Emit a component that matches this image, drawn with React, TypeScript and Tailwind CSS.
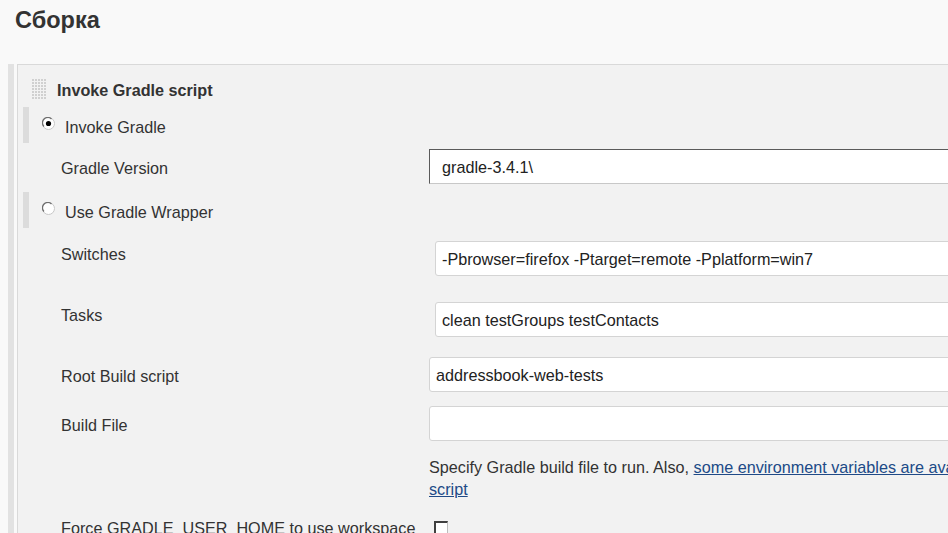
import React from "react";

function Handle() {
  const dots = [];
  for (let r = 0; r < 7; r++) {
    for (let c = 0; c < 5; c++) {
      dots.push(<rect key={r + "-" + c} x={c * 3} y={r * 3} width="2" height="2" fill="#d0d0d0" />);
    }
  }
  return (
    <svg width="15" height="21" viewBox="0 0 15 21">
      {dots}
    </svg>
  );
}

function Radio({ checked }: { checked?: boolean }) {
  return (
    <svg width="13" height="13" viewBox="0 0 13 13">
      <circle cx="6.5" cy="6.5" r="6" fill="#fff" stroke="#c8c8c8" />
      <path d="M2 9.5 A5 5 0 0 1 9.5 2" fill="none" stroke="#6e6e6e" strokeWidth="1.2" />
      {checked && <circle cx="6.5" cy="6.5" r="2.6" fill="#000" />}
    </svg>
  );
}

function RadioRow({ label, checked }: { label: string; checked?: boolean }) {
  return (
    <div className="flex ml-[5px] h-[36px]">
      <div className="w-[6px] bg-[#dcdcdc]" />
      <div className="flex items-center pl-[13px] gap-[10px] pt-[2px]">
        <div className="-mt-[6px]">
          <Radio checked={checked} />
        </div>
        <span className="text-[16.2px] pt-[2px]">{label}</span>
      </div>
    </div>
  );
}

const inputCls =
  "shrink-0 w-[560px] h-[35px] bg-white border border-[#d4d4d4] rounded-[3px] pl-[6px] text-[16.2px] text-[#222] outline-none";

export default function App() {
  return (
    <div className="w-[948px] h-[533px] overflow-hidden bg-[#f9f9f9] text-[#333] font-['Liberation_Sans',Arial,sans-serif]">
      <h1 className="pl-[15px] pt-[5px] text-[23.5px] font-bold leading-[30px] text-[#333]">Сборка</h1>

      <div className="mt-[29px] ml-[8px] flex h-[500px]">
        {/* outer bar */}
        <div className="w-[6px] bg-[#e2e2e2]" />

        {/* panel */}
        <div className="ml-[3px] flex-1 border-t border-l border-[#d9d9d9] bg-[#f2f2f2] overflow-hidden">
          {/* title */}
          <div className="flex items-center h-[21px] mt-[14px] pl-[14px]">
            <Handle />
            <span className="ml-[10px] pt-[2px] text-[16.2px] font-bold text-[#333]">Invoke Gradle script</span>
          </div>

          <div className="mt-[7px]">
            <RadioRow label="Invoke Gradle" checked />
          </div>

          {/* gradle version */}
          <div className="flex items-center h-[35px] mt-[6px]">
            <div className="shrink-0 w-[411px] pl-[43px] pt-[3px] text-[16.2px]">Gradle Version</div>
            <input
              readOnly
              defaultValue="gradle-3.4.1\"
              className="shrink-0 w-[560px] h-[35px] bg-white border border-[#c8c8c8] border-t-[#5a5a5a] border-l-[#5a5a5a] pl-[12px] pt-[2px] text-[16.2px] text-[#222] outline-none"
            />
          </div>

          <div className="mt-[8px]">
            <RadioRow label="Use Gradle Wrapper" />
          </div>

          {/* switches */}
          <div className="flex h-[35px] mt-[13px]">
            <div className="shrink-0 w-[411px] pl-[43px] pt-[1px] text-[16.2px]">Switches</div>
            <input
              readOnly
              defaultValue="-Pbrowser=firefox -Ptarget=remote -Pplatform=win7"
              className={"ml-[6px] pt-[1px] " + inputCls}
            />
          </div>

          {/* tasks */}
          <div className="flex h-[35px] mt-[26px]">
            <div className="shrink-0 w-[411px] pl-[43px] pt-[1px] text-[16.2px]">Tasks</div>
            <input
              readOnly
              defaultValue="clean testGroups testContacts"
              className={"ml-[6px] pt-[1px] " + inputCls}
            />
          </div>

          {/* root build script */}
          <div className="flex items-center h-[35px] mt-[20px]">
            <div className="shrink-0 w-[411px] pl-[43px] pt-[3px] text-[16.2px]">Root Build script</div>
            <input readOnly defaultValue="addressbook-web-tests" className={"pt-[1px] " + inputCls} />
          </div>

          {/* build file */}
          <div className="flex items-center h-[35px] mt-[14px]">
            <div className="shrink-0 w-[411px] pl-[43px] pt-[3px] text-[16.2px]">Build File</div>
            <input readOnly defaultValue="" className={inputCls} />
          </div>

          {/* help */}
          <div className="flex mt-[15px]">
            <div className="w-[411px] shrink-0" />
            <div className="text-[16.2px] leading-[22px] whitespace-nowrap text-[#333]">
              Specify Gradle build file to run. Also,{" "}
              <a className="underline text-[#204a87]">some environment variables are available to the build</a>
              <br />
              <a className="underline text-[#204a87]">script</a>
            </div>
          </div>

          {/* force */}
          <div className="flex items-center h-[22px] mt-[17px]">
            <div className="shrink-0 w-[411px] pl-[43px] pt-[1px] text-[16.2px] whitespace-nowrap">
              Force GRADLE_USER_HOME to use workspace
            </div>
            <div className="ml-[5px] w-[14px] h-[14px] bg-white border-t-2 border-l-2 border-[#404040] border-r border-r-[#bdbdbd] border-b border-b-[#bdbdbd]" />
          </div>
        </div>
      </div>
    </div>
  );
}
